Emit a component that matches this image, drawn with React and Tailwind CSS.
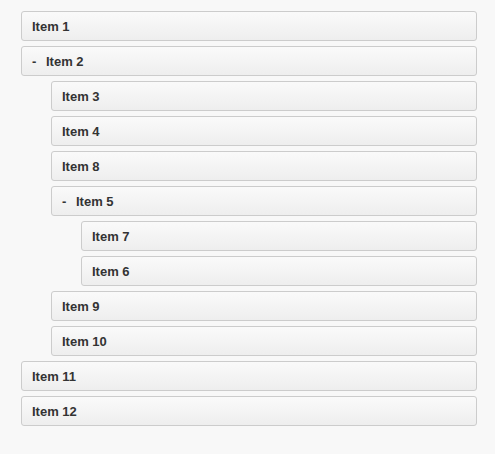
const TREE = [
  { id: 1 },
  {
    id: 2,
    children: [
      { id: 3 },
      { id: 4 },
      { id: 8 },
      { id: 5, children: [{ id: 7 }, { id: 6 }] },
      { id: 9 },
      { id: 10 },
    ],
  },
  { id: 11 },
  { id: 12 },
];

const Item = ({ node }) => (
  <li className="flex flex-col gap-[5px]">
    <div className="h-[30px] px-[10px] pt-[5px] pb-[3px] leading-[20px] text-[13px] font-bold text-[#333] border border-[#ccc] rounded-[3px] bg-gradient-to-b from-[#fafafa] to-[#eee] flex items-center">
      {node.children && <span className="w-[14px]">-</span>}
      <span>Item {node.id}</span>
    </div>
    {node.children && (
      <ul className="pl-[30px] flex flex-col gap-[5px]">
        {node.children.map((c) => <Item key={c.id} node={c} />)}
      </ul>
    )}
  </li>
);

export default function App() {
  return (
    <div className="min-h-[454px] bg-[#f8f8f8] pt-[11px] pl-[21px] pr-[18px]" style={{ fontFamily: '"Liberation Sans", Arial, sans-serif' }}>
      <ul className="flex flex-col gap-[5px]">
        {TREE.map((n) => <Item key={n.id} node={n} />)}
      </ul>
    </div>
  );
}
